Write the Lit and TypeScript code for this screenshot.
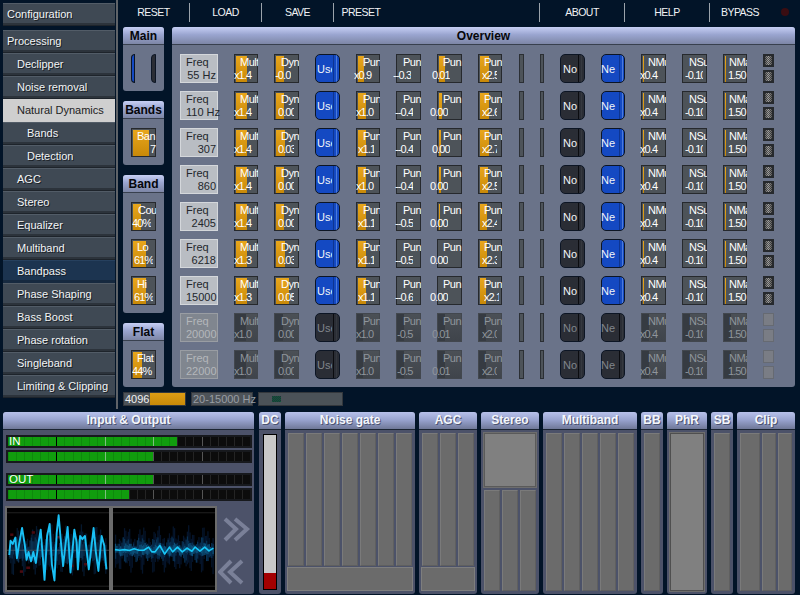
import { LitElement, html, css, svg } from "lit";
import { customElement } from "lit/decorators.js";

const side = [
  ["Processing", 0], ["Declipper", 1], ["Noise removal", 1], ["Natural Dynamics", 1, "on"], ["Bands", 2], ["Detection", 2],
  ["AGC", 1], ["Stereo", 1], ["Equalizer", 1], ["Multiband", 1], ["Bandpass", 1, "hov"], ["Phase Shaping", 1],
  ["Bass Boost", 1], ["Phase rotation", 1], ["Singleband", 1], ["Limiting & Clipping", 1],
] as [string, number, string?][];

const freqs = ["55 Hz", "110 Hz", "307", "860", "2405", "6218", "15000", "20000", "22000"];
const mul = ["x1.4", "x1.4", "x1.4", "x1.4", "x1.4", "x1.3", "x1.3", "x1.0", "x1.0"];
const dyn = ["-0.0", "0.00", "0.03", "0.00", "0.00", "0.03", "0.05", "0.00", "0.00"];
const dynF = [8, 8, 9, 8, 8, 9, 13, 8, 8];
const p1 = ["x0.9", "x1.0", "x1.10", "x1.0", "x1.10", "x1.10", "x1.10", "x1.0", "x1.0"];
const p1O = [-3, -1, 1, -1, 1, 1, 1, -1, -1];
const p1F = [6, 8, 8, 8, 8, 8, 8, 6, 6];
const p2 = ["--0.3", "--0.4", "--0.4", "--0.4", "--0.5", "--0.5", "--0.6", "-0.5", "-0.5"];
const p2O = [-4, -2, -2, -2, -2, -2, -2, 0, 0];
const p3 = ["0.01", "0.00", "0.00", "0.00", "0.00", "0.00", "0.00", "0.01", "0.01"];
const p3O = [-6, -8, -6, -8, -8, -8, -8, -6, -6];
const p3F = [6, 3, 2, 2, 1, 0, 0, 0, 0];
const p4 = ["x2.5", "x2.6", "x2.7", "x2.5", "x2.4", "x2.3", "x2.1", "x2.0", "x2.0"];
const p4F = [9, 9, 9, 8, 7, 7, 6, 7, 7];

const wave1 = "22,160 26,115 33,125 41,105 46,170 52,130 62,75 70,125 76,175 82,150 90,180 97,150 105,185 112,130 120,80 127,170 132,238 140,100 148,62 155,190 163,240 170,90 176,35 184,130 190,195 197,130 204,72 213,215 225,80 232,120 236,205 243,100 250,110 258,100 270,205 285,75 292,150 300,210 310,100 318,130 325,205";
const wave2 = "15,143 30,145 45,143 60,146 75,140 90,145 105,145 120,135 130,150 140,150 155,130 170,157 185,135 195,150 210,135 225,150 240,138 255,148 265,135 280,148 295,135 308,147 322,138";

// Spiky band behind a scope trace, one thin bar per sample.
const band = (x0: number, x1: number, cy: number, amp: number, color: string, seed: number) => {
  const out: unknown[] = [];
  for (let x = x0; x < x1; x += 4) {
    const a = amp * (0.55 + 0.3 * Math.sin(x * 0.13 + seed) + 0.25 * Math.sin(x * 0.41 + seed * 2));
    const b = amp * (0.55 + 0.3 * Math.sin(x * 0.17 + seed * 3) + 0.25 * Math.cos(x * 0.37 + seed));
    out.push(svg`<rect x=${x} y=${cy - a} width="4" height=${a + b} fill=${color}/>`);
  }
  return out;
};

const meter = (lit: number, label?: string) => {
  const cells = Array.from({ length: 30 }, (_, i) => i);
  return html`<div class="meter">
    ${cells.map((i) => html`<i class="seg ${i < lit ? "g" : ""} ${i % 6 === 0 && i > 0 ? "gs" : ""} ${i === 12 || i === 18 ? "ws" : ""}"></i>`)}
    ${label ? html`<span class="mlabel">${label}</span>` : ""}
  </div>`;
};

const knob = (w: number, top: string, tO: number, bot: string, bO: number, fill: number, off = false, bW = 19) => html`
  <div class="knob ${off ? "off" : ""}" style="width:${w}px;--f:${fill}px">
    <span class="l t" style="margin-left:${tO}px;width:${w - tO - 1}px">${top}</span>
    <span class="l v" style="margin-left:${bO}px;width:${bW}px">${bot}</span>
  </div>`;

const btn = (w: number, t: string, o: number, blue: boolean, off = false) => html`
  <div class="btn ${blue ? "blue" : ""} ${off ? "dim" : ""}" style="width:${w}px"><span class="bt" style="margin-left:${o}px">${t}</span></div>`;

const row = (i: number) => {
  const off = i > 6;
  const small = html`<div class="smalls"><i class="sm ${off ? "smoff" : ""}"></i><i class="sm ${off ? "smoff" : ""}"></i></div>`;
  return html`
    <div class="freq ${off ? "freqoff" : ""}"><span>Freq</span><span class="fv">${freqs[i]}</span></div>
    ${knob(24, "Mult", 5, mul[i], -1, 11, off)}
    ${knob(25, "Dyn", 6, dyn[i], dyn[i] === "-0.0" ? 0 : 3, dynF[i], off, 16)}
    ${btn(25, "Use", 1, !off, off)}
    ${knob(24, "Pun", 6, p1[i], p1O[i], p1F[i], off, p1[i] === "x1.10" ? 16 : 19)}
    ${knob(25, "Pun", 6, p2[i], p2O[i], off ? 7 : 0, off, 18)}
    ${knob(25, "Pun", 5, p3[i], p3O[i], off ? 7 : p3F[i], off, 18)}
    ${knob(24, "Pun", 5, p4[i], p4[i] === "x2.1" ? 5 : 3, p4F[i], off, 15)}
    <i class="nar" style="width:5px"></i>
    <i class="nar" style="width:4px"></i>
    ${btn(25, "No", 2, false, off)}
    ${btn(24, "Ne", -1, !off, off)}
    ${knob(25, "NMul", 6, "x0.4", -2, off ? 7 : 1, off)}
    ${knob(25, "NSub", 6, "-0.10", 2, off ? 7 : 0, off, 18)}
    ${knob(24, "NMax", 5, "1.50", 4, off ? 7 : 1, off)}
    ${small}`;
};

const panel = (title: string, w: number, cls: string, body: unknown) => html`
  <section class="bp" style="width:${w}px"><header class="bh">${title}</header><div class="bb ${cls}">${body}</div></section>`;

const cols = (n: number) => html`<div class="cols">${Array.from({ length: n }, () => html`<i class="col"></i>`)}</div>`;

@customElement("app-root")
export class AppRoot extends LitElement {
  static styles = css`
    :host { display: block; width: 800px; height: 595px; overflow: hidden; background: #021428;
      font: 11px "Liberation Sans", Arial, sans-serif; color: #fff; }
    * { box-sizing: border-box; }
    i { display: block; }
    .top { display: flex; height: 409px; }
    .side { width: 116px; padding: 3px 0 0 3px; }
    .item { width: 112px; height: 23px; line-height: 22px; background: linear-gradient(#525c67 0 1px, #3f4954 1px 20px, #2c333b 20px 22px, #1e242b 22px);
      color: #f2f4f6; text-shadow: 1px 1px 0 #1a1f25; white-space: nowrap; }
    .item.sep { margin-bottom: 4px; }
    .item.on { background: #cfcfcf; color: #222; text-shadow: none; }
    .item.hov { background: linear-gradient(#26405e 0 1px, #1c3450 1px 20px, #16293f 20px); }
    .vline { width: 2px; background: #5f6368; }
    .main { flex: 1; display: flex; flex-direction: column; }
    .bar { height: 27px; display: grid; grid-template-columns: 72px 72px 72px 54px 152px 85px 85px 60px 1fr; align-items: start; padding-top: 3px; }
    .tb { height: 19px; line-height: 18px; text-align: center; color: #f0f2f5; border-right: 1px solid #9ba3ab; font-size: 10.5px; letter-spacing: -.5px; }
    .tb.nb { border-right: 0; }
    .led { width: 8px; height: 8px; margin: 5px 0 0 11px; border-radius: 50%; background: #3a0d12; }
    .work { display: flex; gap: 8px; padding-left: 5px; height: 360px; }
    .lc { width: 41px; display: flex; flex-direction: column; gap: 10px; }
    .pn { background: #6a7389; border-radius: 3px; display: flex; flex-direction: column; }
    .ph { height: 18px; line-height: 18px; text-align: center; font-weight: 700; font-size: 12px; color: #05060a;
      background: linear-gradient(#c6cff4, #9aa5d0 45%, #7d86a6); border-bottom: 1px solid #38404e; border-radius: 3px 3px 0 0; }
    .pbody { padding: 9px 0 0 8px; display: flex; flex-direction: column; gap: 8px; flex: 1; }
    .toggles { display: flex; flex-direction: row; gap: 16px; }
    .tog { height: 29px; border: 1px solid #0b1525; }
    .tog.a { width: 4px; background: #1449c2; border-radius: 4px 0 0 4px; }
    .tog.b { width: 5px; background: #2a2d35; border-radius: 4px 0 0 4px; }
    .over { width: 623px; }
    .grid { display: grid; grid-template-columns: 54px 40px 41px 41px 40px 41px 41px 41px 21px 20px 41px 40px 41px 41px 40px 11px;
      grid-auto-rows: 29px; row-gap: 8px; justify-items: start; padding: 9px 0 0 8px; }
    .knob { height: 29px; width: 25px; border: 1px solid #26292d; color: #fff;
      background: linear-gradient(#e8a61c, #c98908) 1px 1px / var(--f) calc(100% - 1px) no-repeat, #4d5359; }
    .knob.off { color: #8f959c; background: linear-gradient(#363b42, #363b42) 0 0 / var(--f) 100% no-repeat, linear-gradient(#4b5056, #3f444b); border-color: #42474e; }
    .l { display: block; height: 13px; line-height: 13px; overflow: hidden; white-space: nowrap; }
    .l.t { letter-spacing: -.5px; margin-top: 1px; }
    .l.v { letter-spacing: -.9px; }
    .freq { width: 38px; height: 29px; background: #b9bdc3; border: 1px solid #d4d7db; color: #23272c; padding: 0 1px 0 5px; display: flex; flex-direction: column; line-height: 13px; }
    .freq span:first-child { margin-top: 1px; }
    .fv { text-align: right; white-space: nowrap; }
    .freqoff { background: #80868f; border-color: #999da3; color: #b4b7bb; }
    .btn { height: 29px; border: 1px solid #0c1524; border-radius: 5px; display: flex; align-items: center; white-space: nowrap; color: #f2f4f7;
      background: linear-gradient(to right, #2a2d35 0 17px, #0b0c10 17px 18px, #2a2d35 18px 20px, #34383f 20px 21px, #2a2d35 21px); }
    .btn.blue { background: linear-gradient(to right, #1449c2 0 17px, #0e3590 17px 18px, #1449c2 18px 20px, #4b7bdc 20px 21px, #1449c2 21px); }
    .btn.dim { color: #80858c; }
    .bt { display: block; width: 15px; overflow: hidden; }
    .nar { height: 29px; background: #4d5359; border: 1px solid #2b2f34; }
    .smalls { width: 11px; height: 29px; display: flex; flex-direction: column; justify-content: space-between; }
    .sm { height: 13px; border: 2px solid #26292d; background: linear-gradient(to right, #0007, #0000 45%, #0007), repeating-conic-gradient(#a8a8a8 0 25%, #555 0 50%) 0 0 / 2px 2px; }
    .smoff { background: #7a7d85; border: 1px solid #666a72; }
    .foot { display: flex; gap: 5px; margin-top: 5px; padding-left: 5px; height: 14px; }
    .fk { width: 63px; height: 14px; border: 1px solid #33373c; line-height: 12px; padding-left: 1px; color: #f0f0f0;
      background: linear-gradient(#dc9c14, #c88a08) 26px 0 / 100% 100% no-repeat, #4d5359; }
    .fr { width: 62px; height: 14px; border: 1px solid #33373c; background: #4d5359; color: #989da3; line-height: 12px; padding-left: 1px; white-space: nowrap; }
    .fs { width: 85px; height: 14px; border: 1px solid #33373c; background: #4b5258; padding: 3px 0 0 13px; }
    .dots { width: 9px; height: 6px; background: repeating-conic-gradient(#0f5a3a 0 25%, #203238 0 50%) 0 0 / 2px 2px; }
    .bottom { display: flex; gap: 4px; height: 186px; padding: 3px 0 1px 3px; }
    .bp { display: flex; flex-direction: column; background: #4c5269; border-radius: 3px; }
    .dcp { margin-left: 1px; }
    .bh { height: 18px; line-height: 17px; text-align: center; font-weight: 700; font-size: 12px; color: #f4f6fb; text-shadow: 1px 1px 0 #4a5270; white-space: nowrap;
      background: linear-gradient(#b7c1ea, #99a4d0 45%, #6f7898); border-bottom: 1px solid #1c2533; border-radius: 3px 3px 0 0; }
    .bb { flex: 1; display: flex; flex-direction: column; gap: 1px; padding: 3px; min-height: 0; }
    .cols { flex: 1; display: flex; gap: 2px; min-height: 0; }
    .col { flex: 1; background: #6b6b6b; border: 1px solid #7a7a7a; border-right-color: #5f5f5f; border-bottom-color: #5f5f5f; }
    .wide { height: 24px; margin: 0 -1px; background: #6b6b6b; border: 1px solid #7e7e7e; flex: none; }
    .box { height: 56px; background: #808080; border: 1px solid #6d6d6d; outline: 1px solid #5a5a5a; outline-offset: -2px; margin: -1px -1px 1px; flex: none; }
    .boxfull { flex: 1; background: #808080; border: 1px solid #6d6d6d; outline: 1px solid #4f4f4f; outline-offset: -2px; margin: -1px; }
    .clipc { flex: none; }
    .io { padding: 5px 0 0 3px; display: block; }
    .meters { display: flex; flex-direction: column; gap: 2px; width: 246px; }
    .mgap { height: 7px; margin-top: -1px; }
    .meter { position: relative; height: 13px; display: flex; background: #000; border: 2px solid #17191d; width: 246px; }
    .seg { flex: 1; background: #0c0c0c; border-left: 1px solid #242424; }
    .seg.g { background: #119d0e; border-left-color: #0e8a0c; }
    .seg.gs { border-left: 1px solid #000; }
    .seg.ws { border-left: 1px solid #7fbf7f; }
    .seg.gs:not(.g) { border-left-color: #555; }
    .mlabel { position: absolute; left: 1px; top: -2px; line-height: 13px; color: #fff; font-size: 11.5px; }
    .scoperow { display: flex; align-items: flex-start; margin: 5px 0 0 -1px; }
    .scope { border: 2px solid #6b6b6b; background: #000; display: block; height: 86px; }
    .arrows { width: 36px; margin-left: 1px; }
    .arrows svg { display: block; }
    .dc { padding: 4px; display: block; }
    .dcbar { height: 156px; width: 14px; border: 1px solid #000; background: linear-gradient(#c9c9c9 0 138px, #a30000 138px); }
  `;

  private scope(w: number, pts: string, dim: boolean, vb: string) {
    return html`<svg class="scope" width=${w} height="86" viewBox=${vb} preserveAspectRatio="none">
      ${svg`<line x1="0" x2="340" y1="27" y2="27" stroke="#222" stroke-width="3"/>
      <line x1="0" x2="340" y1="258" y2="258" stroke="#222" stroke-width="3"/>`}
      ${dim
        ? svg`${band(15, 322, 143, 70, "#05142a", 1.3)}${band(15, 322, 143, 38, "#083052", 2.1)}${band(15, 322, 143, 20, "#0d5079", 0.7)}
           <polyline points=${pts} fill="none" stroke="#18c8f8" stroke-width="5" stroke-linejoin="round"/>`
        : svg`${band(21, 325, 145, 75, "#05182e", 0.9)}${band(21, 325, 145, 42, "#0b3050", 1.7)}
           <g fill="#4a0a10"><rect x="25" y="92" width="10" height="8"/><rect x="92" y="85" width="10" height="8"/><rect x="170" y="100" width="10" height="8"/><rect x="75" y="196" width="12" height="8"/><rect x="215" y="190" width="8" height="8"/><rect x="255" y="185" width="10" height="8"/><rect x="55" y="208" width="10" height="8"/></g>
           <line x1="0" x2="340" y1="145" y2="145" stroke="#55606a" stroke-width="2"/>
           <polyline points=${pts} fill="none" stroke="#19c0f5" stroke-width="6" stroke-linejoin="round"/>`}
    </svg>`;
  }

  render() {
    return html`
      <div class="top">
        <nav class="side">
          <div class="item sep" style="padding-left:4px">Configuration</div>
          ${side.map(([t, lv, c]) => html`<div class="item ${c ?? ""}" style="padding-left:${4 + lv * 10}px">${t}</div>`)}
        </nav>
        <div class="vline"></div>
        <div class="main">
          <div class="bar">
            <div class="tb">RESET</div><div class="tb">LOAD</div><div class="tb">SAVE</div>
            <div class="tb nb">PRESET</div><div class="tb"></div>
            <div class="tb">ABOUT</div><div class="tb">HELP</div><div class="tb nb">BYPASS</div>
            <i class="led"></i>
          </div>
          <div class="work">
            <div class="lc">
              <div class="pn" style="height:64px"><div class="ph">Main</div><div class="pbody toggles"><i class="tog a"></i><i class="tog b"></i></div></div>
              <div class="pn" style="height:64px"><div class="ph">Bands</div><div class="pbody">${knob(25, "Ban", 5, "7", 18, 16)}</div></div>
              <div class="pn" style="height:138px"><div class="ph">Band</div><div class="pbody">
                ${knob(25, "Cou", 6, "40%", 0, 8)}${knob(25, "Lo", 5, "61%", 2, 13)}${knob(25, "Hi", 5, "61%", 2, 13)}
              </div></div>
              <div class="pn" style="height:64px"><div class="ph">Flat</div><div class="pbody">${knob(25, "Flat", 5, "44%", 0, 9, false, 21)}</div></div>
            </div>
            <div class="pn over">
              <div class="ph">Overview</div>
              <div class="grid">${freqs.map((_, i) => row(i))}</div>
            </div>
          </div>
          <div class="foot">
            <div class="fk">4096</div>
            <div class="fr">20-15000 Hz</div>
            <div class="fs"><i class="dots"></i></div>
          </div>
        </div>
      </div>
      <div class="bottom">
        ${panel("Input & Output", 251, "io", html`
          <div class="meters">
            ${meter(21, "IN")}${meter(18)}<div class="mgap"></div>${meter(18, "OUT")}${meter(15)}
          </div>
          <div class="scoperow">
            ${this.scope(106, wave1, false, "15 12 318 258")}
            ${this.scope(106, wave2, true, "9 12 318 258")}
            <div class="arrows">
              <svg width="36" height="80" viewBox="0 0 36 80">
                <g fill="none" stroke="#7a8098" stroke-width="4">
                  <polyline points="7,13 18,23 7,34"/><polyline points="17,13 29,23 17,34"/>
                  <polyline points="13,55 2,66 13,77"/><polyline points="24,55 12,66 24,77"/>
                </g>
              </svg>
            </div>
          </div>`)}
        <section class="bp dcp" style="width:22px"><header class="bh">DC</header><div class="bb dc"><div class="dcbar"></div></div></section>
        ${panel("Noise gate", 130, "", html`${cols(7)}<i class="wide"></i>`)}
        ${panel("AGC", 58, "", html`${cols(3)}<i class="wide"></i>`)}
        ${panel("Stereo", 58, "", html`<i class="box"></i>${cols(3)}`)}
        ${panel("Multiband", 94, "", cols(5))}
        ${panel("BB", 22, "", cols(1))}
        ${panel("PhR", 40, "", html`<i class="boxfull"></i>`)}
        ${panel("SB", 22, "", cols(1))}
        ${panel("Clip", 58, "", html`<div class="cols">
          <i class="col clipc" style="width:20px"></i><i class="col clipc" style="width:14px"></i><i class="col clipc" style="width:14px"></i>
        </div>`)}
      </div>`;
  }
}
